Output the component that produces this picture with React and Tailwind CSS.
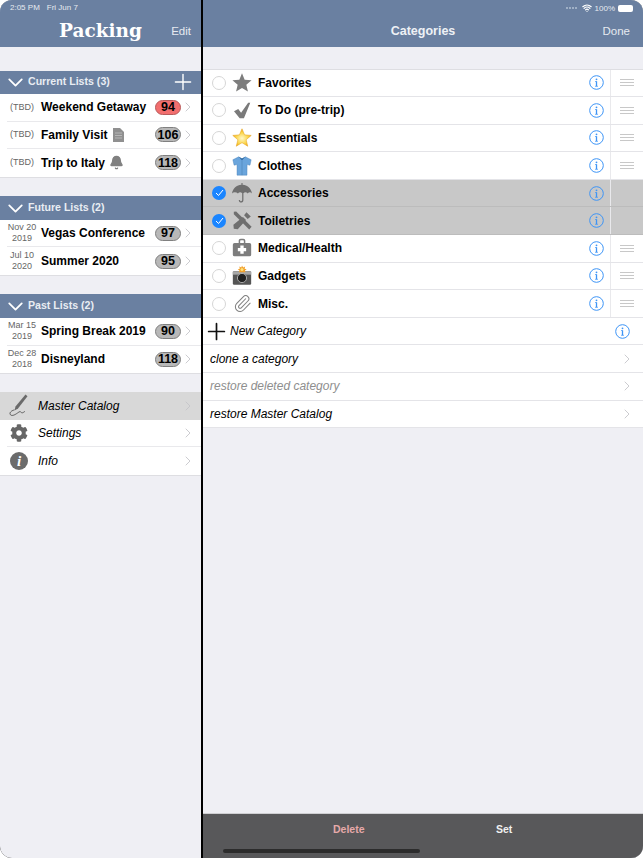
import { ChevronRight, ChevronDown, Plus, Wifi, Paperclip, Bell } from 'lucide-react';
import { FaCog } from 'react-icons/fa';

const currentLists = [
  { date: ['(TBD)'], name: 'Weekend Getaway', count: 94, red: true },
  { date: ['(TBD)'], name: 'Family Visit', count: 106, icon: 'doc' },
  { date: ['(TBD)'], name: 'Trip to Italy', count: 118, icon: 'bell' },
];
const futureLists = [
  { date: ['Nov 20', '2019'], name: 'Vegas Conference', count: 97 },
  { date: ['Jul 10', '2020'], name: 'Summer 2020', count: 95 },
];
const pastLists = [
  { date: ['Mar 15', '2019'], name: 'Spring Break 2019', count: 90 },
  { date: ['Dec 28', '2018'], name: 'Disneyland', count: 118 },
];
const categories = [
  { name: 'Favorites', icon: 'star' },
  { name: 'To Do (pre-trip)', icon: 'check' },
  { name: 'Essentials', icon: 'goldstar' },
  { name: 'Clothes', icon: 'shirt' },
  { name: 'Accessories', icon: 'umbrella', on: true },
  { name: 'Toiletries', icon: 'tools', on: true },
  { name: 'Medical/Health', icon: 'medical' },
  { name: 'Gadgets', icon: 'camera' },
  { name: 'Misc.', icon: 'clip' },
];

function CatIcon({ type }) {
  if (type === 'star')
    return (
      <svg width="21" height="21" viewBox="0 0 24 24" fill="#7d7d7d">
        <path d="M12 1l3.2 7.6 8.3.7-6.3 5.4 1.9 8.1L12 18.5l-7.1 4.3 1.9-8.1L.5 9.3l8.3-.7z" />
      </svg>
    );
  if (type === 'check')
    return (
      <svg width="17" height="17" viewBox="0 0 24 24" fill="#7a7a7a">
        <path d="M0 13l6-3 4 5L20 1h3l-9 22H8z" />
      </svg>
    );
  if (type === 'goldstar')
    return (
      <svg width="21" height="21" viewBox="0 0 24 24">
        <defs>
          <radialGradient id="gold" cx="50%" cy="55%" r="55%">
            <stop offset="0%" stopColor="#fff8c8" />
            <stop offset="60%" stopColor="#fbd54a" />
            <stop offset="100%" stopColor="#f0a010" />
          </radialGradient>
        </defs>
        <path d="M12 1.500l3.100 7.300 8 .7-6.100 5.200 1.900 7.800L12 18.200l-6.900 4.300L7 14.700.9 9.500l8-.7z" fill="url(#gold)" stroke="#e2a11e" strokeWidth="0.6" />
      </svg>
    );
  if (type === 'shirt')
    return (
      <svg width="20" height="20" viewBox="0 0 24 24">
        <path d="M8 1L1 4.500l1.500 6.500 3.500-.7L6 23h12l.1-12.700 3.500.7L23 4.500 16 1l-4 2.500z" fill="#6aa5dc" stroke="#4a80b5" strokeWidth="0.5" />
        <path d="M8 1l4 4.500L16 1l-4 2z" fill="#2f6aa3" />
        <path d="M12 5.500V23" stroke="#4a80b5" strokeWidth="0.7" />
      </svg>
    );
  if (type === 'umbrella')
    return (
      <svg width="20" height="20" viewBox="0 0 24 24" fill="#6f6f6f">
        <path d="M11.300 0h1.400v2.200C18.500 2.600 23 6.600 24 12.500c-1.600-1.700-3.600-1.800-5.200 0-1.500-1.600-3.600-1.700-5.100-.2v8.300c0 3.800-5.600 3.800-5.600-.3h1.500c0 2 2.600 2 2.600.2v-8.200c-1.500-1.500-3.600-1.400-5.100.2C5 10.700 1.600 10.800 0 12.500 1 6.600 5.500 2.600 11.300 2.200z" />
      </svg>
    );
  if (type === 'tools')
    return (
      <svg width="19" height="19" viewBox="0 0 24 24" fill="#6f6f6f">
        <path d="M1 1l3-.5L23.500 20 20.500 23.500 1 4z" />
        <path d="M17 1.500l5.500 5.500-4 3-4.500-4.500zM12.500 7.500l4 4L6 23l-5-.5-.5-5z" />
      </svg>
    );
  if (type === 'medical')
    return (
      <svg width="20" height="20" viewBox="0 0 24 24">
        <path d="M8 6V3.500C8 2 9 1 10.500 1h3C15 1 16 2 16 3.500V6h-1.800V3.500c0-.4-.3-.7-.7-.7h-3c-.4 0-.7.3-.7.7V6z" fill="#7d7d7d" />
        <rect x="1" y="6" width="22" height="16" rx="2" fill="#7d7d7d" />
        <path d="M10 9h4v3h3v4h-3v3h-4v-3H7v-4h3z" fill="#fff" />
      </svg>
    );
  if (type === 'camera')
    return (
      <svg width="21" height="21" viewBox="0 0 24 24">
        <rect x="1" y="7" width="22" height="16" rx="1.500" fill="#555" />
        <rect x="1" y="7" width="22" height="4" fill="#a8a8a8" />
        <circle cx="12" cy="15" r="5.500" fill="#222" stroke="#bbb" strokeWidth="1" />
        <path d="M12 0l1.300 2.300 2.500-1-.7 2.600 2.500.7-2.100 1.500.8 2.100H8.200l.8-2.100-2.100-1.500 2.500-.7-.7-2.600 2.500 1z" fill="#f2a02c" />
        <circle cx="12" cy="4.800" r="1.800" fill="#ffe27a" />
      </svg>
    );
  return <Paperclip size={19} color="#7f7f7f" strokeWidth={1.300} />;
}

function MasterIcon() {
  return (
    <svg width="20" height="23" viewBox="0 0 20 23" fill="none">
      <path d="M16.500 0.500l2 1.800L9 14.500 5.500 16.500l1-4z" fill="#6a6a6a" />
      <path d="M5 16c-3 .8-5 3-3.500 4.800 1.500 1.700 5-.3 7-1.800s3-1.800 3.500-.8c.5 1.200 2 .6 3.500-.5" stroke="#5c5c5c" strokeWidth="1" strokeLinecap="round" />
    </svg>
  );
}

function Chevron({ color = '#c4c4c8' }) {
  return <ChevronRight size={16} color={color} strokeWidth={1.300} />;
}

function Badge({ count, red }) {
  return (
    <div className={`w-[26px] h-[15px] rounded-full border flex items-center justify-center text-[12.500px] font-bold text-black ${red ? 'bg-[#f26e6e] border-[#b85a5a]' : 'bg-[#b8b8b8] border-[#808080]'}`}>
      {count}
    </div>
  );
}

function ListRow({ item, last }) {
  return (
    <div className="h-[27.6px] bg-white pl-[7px]">
      <div className={`h-full flex items-center pr-[5px] ${last ? '' : 'border-b border-[#e9e9ec]'}`}>
        <div className="w-[30px] text-center text-[9px] leading-[11.500px] text-[#666] shrink-0 whitespace-nowrap">
          {item.date.map((d) => (
            <div key={d}>{d}</div>
          ))}
        </div>
        <div className="ml-[4px] text-[12px] font-bold text-black whitespace-nowrap">{item.name}</div>
        {item.icon === 'doc' && (
          <svg className="ml-[6px]" width="11" height="14" viewBox="0 0 11 14">
            <path d="M0 0h7l4 4v10H0z" fill="#909090" />
            <path d="M2 5h7M2 7.500h7M2 10h7" stroke="#c8c8c8" strokeWidth="0.700" />
          </svg>
        )}
        {item.icon === 'bell' && <Bell className="ml-[4px]" size={15} color="#808080" fill="#808080" />}
        <div className="ml-auto flex items-center">
          <Badge count={item.count} red={item.red} />
          <div className="-ml-px">
            <Chevron />
          </div>
        </div>
      </div>
    </div>
  );
}

function Section({ title, items, add }) {
  return (
    <div className="border-b border-[#dedee2]">
      <div className="h-[23.500px] bg-[#6a80a1] flex items-center pl-[3px] pr-[5px] text-[#e9edf3]">
        <ChevronDown size={25} strokeWidth={1.700} color="#fff" />
        <span className="text-[10.600px] font-bold">{title}</span>
        {add && <Plus className="ml-auto" size={26} strokeWidth={1.300} color="#fff" />}
      </div>
      {items.map((item, i) => (
        <ListRow key={item.name} item={item} last={i === items.length - 1} />
      ))}
    </div>
  );
}

function MenuRow({ icon, label, active, last }) {
  return (
    <div className={`h-[27.6px] pl-[7px] ${active ? 'bg-[#d8d8d8]' : 'bg-white'}`}>
      <div className={`h-full flex items-center pr-[5px] ${last || active ? '' : 'border-b border-[#e9e9ec]'}`}>
        <div className="w-[24px] flex justify-center shrink-0">{icon}</div>
        <div className="ml-[7px] text-[12px] italic text-black">{label}</div>
        <div className="ml-auto">
          <Chevron />
        </div>
      </div>
    </div>
  );
}

function InfoIcon() {
  return (
    <svg width="15" height="15" viewBox="0 0 15 15" fill="none">
      <circle cx="7.500" cy="7.500" r="6.800" stroke="#3d94f6" strokeWidth="1" />
      <circle cx="7.500" cy="4.300" r="0.900" fill="#3d94f6" />
      <path d="M7.500 6.300v5" stroke="#3d94f6" strokeWidth="1.300" />
      <path d="M6 6.500h1.500M6 11.300h3" stroke="#3d94f6" strokeWidth="0.700" />
    </svg>
  );
}

function CategoryRow({ cat }) {
  return (
    <div className={`h-[27.6px] flex items-center border-b pl-[9px] ${cat.on ? 'bg-[#c8c8c8] border-[#bcbcbc]' : 'bg-white border-[#e4e4e8]'}`}>
      {cat.on ? (
        <div className="w-[14px] h-[14px] rounded-full bg-[#1a85ff] flex items-center justify-center shrink-0">
          <svg width="9" height="8" viewBox="0 0 9 8" fill="none">
            <path d="M1 4l2.500 2.500L8 1" stroke="#fff" strokeWidth="1" />
          </svg>
        </div>
      ) : (
        <div className="w-[14px] h-[14px] rounded-full border border-[#d6d6d6] shrink-0" />
      )}
      <div className="w-[20px] ml-[6px] flex justify-center shrink-0">
        <CatIcon type={cat.icon} />
      </div>
      <div className="ml-[6px] text-[12px] font-bold text-black">{cat.name}</div>
      <div className="ml-auto flex items-center h-full">
        <InfoIcon />
        <div className="ml-[6px] w-[33px] h-full border-l border-[#e9e9ec] flex flex-col items-center justify-center gap-[2px]">
          {!cat.on && (
            <>
              <div className="w-[14px] h-px bg-[#c8c8c8]" />
              <div className="w-[14px] h-px bg-[#c8c8c8]" />
              <div className="w-[14px] h-px bg-[#c8c8c8]" />
            </>
          )}
        </div>
      </div>
    </div>
  );
}

function ActionRow({ label, muted }) {
  return (
    <div className="h-[27.6px] bg-white border-b border-[#e4e4e8] flex items-center pl-[7px] pr-[8px]">
      <span className={`text-[12px] italic ${muted ? 'text-[#8e8e8e]' : 'text-black'}`}>{label}</span>
      <div className="ml-auto">
        <Chevron />
      </div>
    </div>
  );
}

export default function App() {
  return (
    <div className="w-[643px] h-[858px] flex bg-black rounded-[12px] overflow-hidden font-['Liberation_Sans',sans-serif]">
      {/* left pane */}
      <div className="w-[201px] shrink-0 bg-[#efeff4] flex flex-col">
        <div className="h-[47px] bg-[#6a80a1] shrink-0 relative">
          <div className="pl-[10px] pt-[3px] text-[8px] leading-[9px] text-[#e6eaf0] flex gap-[7px]">
            <span>2:05 PM</span>
            <span>Fri Jun 7</span>
          </div>
          <div className="flex items-center justify-center h-[30px] mt-[4px]">
            <span className="font-['DejaVu_Serif',serif] font-bold text-[18.500px] text-white">Packing</span>
          </div>
          <span className="absolute right-[10px] top-[23px] text-[11.500px] text-[#e6eaf0]">Edit</span>
        </div>
        <div className="mt-[23.500px]">
          <Section title="Current Lists (3)" items={currentLists} add />
        </div>
        <div className="mt-[18.500px]">
          <Section title="Future Lists (2)" items={futureLists} />
        </div>
        <div className="mt-[18.500px]">
          <Section title="Past Lists (2)" items={pastLists} />
        </div>
        <div className="mt-[18px] border-b border-[#dedee2]">
          <MenuRow icon={<MasterIcon />} label="Master Catalog" active />
          <MenuRow icon={<FaCog size={18} color="#666" />} label="Settings" />
          <MenuRow
            icon={
              <div className="w-[18px] h-[18px] rounded-full bg-[#6b6b6b] flex items-center justify-center">
                <span className="font-['Liberation_Serif',serif] font-bold italic text-[15px] leading-none text-white">i</span>
              </div>
            }
            label="Info"
            last
          />
        </div>
      </div>

      {/* right pane */}
      <div className="ml-[2px] flex-1 bg-[#efeff4] flex flex-col relative">
        <div className="h-[47px] bg-[#6a80a1] shrink-0 relative flex items-end justify-center pb-[6px]">
          <div className="absolute right-[10px] top-[3px] flex items-center gap-[3px] text-[8px] leading-[9px] text-[#e6eaf0]">
            <div className="flex gap-[1.500px] mr-[2px]">
              <div className="w-[1.500px] h-[1.500px] bg-[#9fb0c6]" />
              <div className="w-[1.500px] h-[1.500px] bg-[#9fb0c6]" />
              <div className="w-[1.500px] h-[1.500px] bg-[#9fb0c6]" />
              <div className="w-[1.500px] h-[1.500px] bg-[#9fb0c6]" />
            </div>
            <Wifi size={10} strokeWidth={3} color="#fff" />
            <span>100%</span>
            <div className="w-[15px] h-[7px] rounded-[2px] bg-white" />
          </div>
          <span className="text-[12.500px] font-bold text-[#eef1f5]">Categories</span>
          <span className="absolute right-[13px] top-[23px] text-[11.500px] text-[#e6eaf0]">Done</span>
        </div>
        <div className="mt-[21.500px] border-t border-[#dedee2]">
          {categories.map((cat) => (
            <CategoryRow key={cat.name} cat={cat} />
          ))}
          <div className="h-[27.6px] bg-white border-b border-[#e4e4e8] flex items-center pr-[13px]">
            <Plus size={27} strokeWidth={1.500} color="#111" />
            <span className="text-[12px] italic text-black">New Category</span>
            <div className="ml-auto">
              <InfoIcon />
            </div>
          </div>
          <ActionRow label="clone a category" />
          <ActionRow label="restore deleted category" muted />
          <ActionRow label="restore Master Catalog" />
        </div>
        <div className="mt-auto h-[45px] bg-[#58585a] border-t border-[#cfcfd2] flex items-center justify-center relative">
          <span className="absolute left-[130px] top-[8px] text-[10.500px] font-bold text-[#e6a9a9]">Delete</span>
          <span className="absolute left-[293px] top-[8px] text-[10.500px] font-bold text-[#f0f0f0]">Set</span>
          <div className="absolute left-[20px] bottom-[5px] w-[197px] h-[4px] rounded-full bg-[#2c2c2c]" />
        </div>
      </div>
    </div>
  );
}
